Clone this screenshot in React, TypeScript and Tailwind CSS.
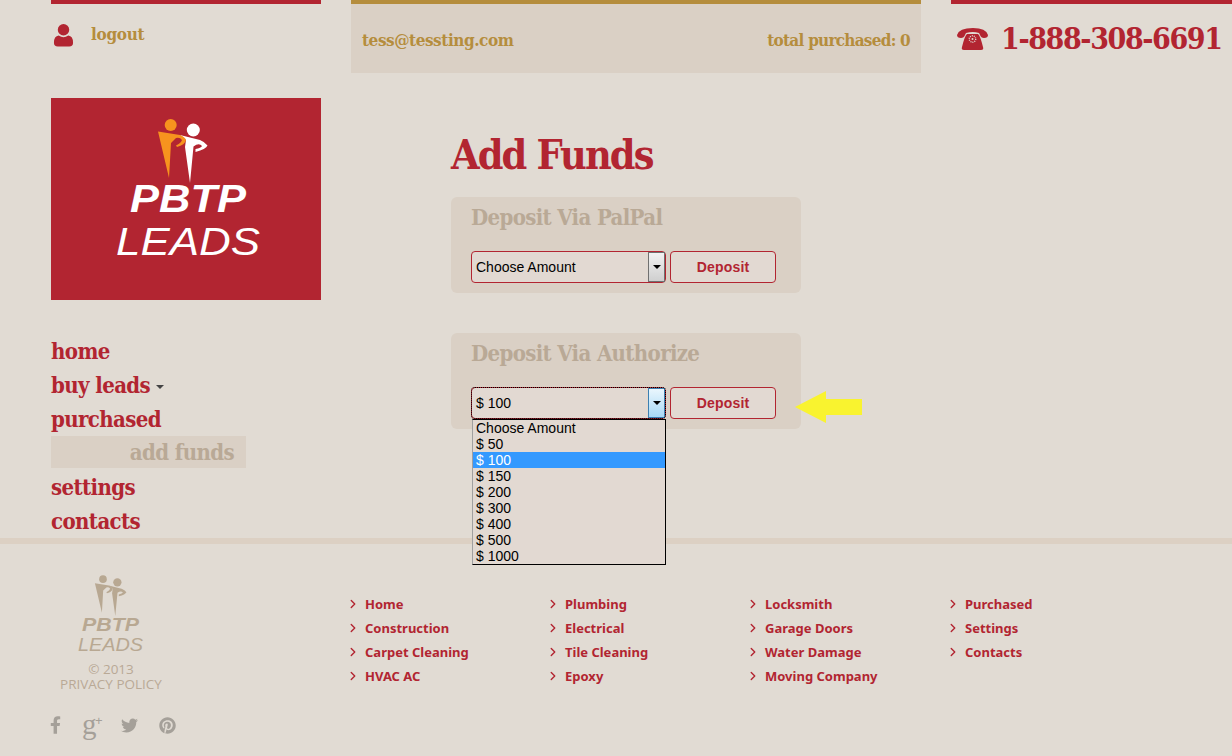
import { ChevronRight } from 'lucide-react';
import { FaFacebookF, FaPinterest, FaTwitter } from 'react-icons/fa';

const slab = "font-['DejaVu_Serif_Condensed','DejaVu_Serif',serif] font-bold";
const amounts = ['Choose Amount', '$ 50', '$ 100', '$ 150', '$ 200', '$ 300', '$ 400', '$ 500', '$ 1000'];
const footerColumns = [
  ['Home', 'Construction', 'Carpet Cleaning', 'HVAC AC'],
  ['Plumbing', 'Electrical', 'Tile Cleaning', 'Epoxy'],
  ['Locksmith', 'Garage Doors', 'Water Damage', 'Moving Company'],
  ['Purchased', 'Settings', 'Contacts'],
];

function Figures({ first, second }: { first: string; second: string }) {
  return (
    <>
      <circle cx="193.3" cy="130" r="6.5" fill={second} />
      <path d="M180 135 L192 138 L200 140 Q205 142 207.5 145.5 Q206 149 195.5 152 L195.5 149 Q201 148 202 146 Q199 142.5 193.5 146.5 L190 183 L185 147 L186 140 Z" fill={second} />
      <circle cx="170.7" cy="125" r="6" fill={first} />
      <path d="M158 131.5 L180 135 Q185 137 186 140 Q185 145 177 147 L176 145.5 Q181 143 182 140 Q180 137 176 138 L171 143 L169 178 Z" fill={first} />
    </>
  );
}

function Logo() {
  return (
    <svg viewBox="51 98 270 202" className="block h-[202px] w-[270px] bg-[#b22531]">
      <Figures first="#f7931e" second="#ffffff" />
      <text x="130" y="212" textLength="116" lengthAdjust="spacingAndGlyphs" fill="#fff" fontFamily="Liberation Sans" fontWeight="700" fontStyle="italic" fontSize="38">PBTP</text>
      <text x="116" y="255" textLength="144" lengthAdjust="spacingAndGlyphs" fill="#fff" fontFamily="Liberation Sans" fontStyle="italic" fontSize="39">LEADS</text>
    </svg>
  );
}

function FooterLogo() {
  return (
    <svg viewBox="0 0 66 80" className="block h-[80px] w-[66px]">
      <svg x="15" y="0" width="35" height="44" viewBox="155 118 55 67">
        <Figures first="#b8a892" second="#b8a892" />
      </svg>
      <text x="4" y="57" textLength="57" lengthAdjust="spacingAndGlyphs" fill="#b8a892" fontFamily="Liberation Sans" fontWeight="700" fontStyle="italic" fontSize="18">PBTP</text>
      <text x="0" y="77" textLength="65" lengthAdjust="spacingAndGlyphs" fill="#b8a892" fontFamily="Liberation Sans" fontStyle="italic" fontSize="18">LEADS</text>
    </svg>
  );
}

function SelectBox({ value, open }: { value: string; open?: boolean }) {
  return (
    <div className={`relative flex h-8 w-[195px] items-center justify-between rounded border border-[#b22531] bg-[#e2d9d2] pl-1 text-sm text-black ${open ? 'outline-1 outline-dotted outline-black -outline-offset-1' : ''}`}>
      <span>{value}</span>
      <span className={`flex h-[30px] w-[17px] items-center justify-center border ${open ? 'border-[#3c7fb1] bg-gradient-to-b from-[#eaf6fd] to-[#a7d9f5]' : 'border-[#707070] bg-gradient-to-b from-[#f2f2f2] to-[#cfcfcf]'}`}>
        <span className="h-0 w-0 border-x-[4px] border-t-[4px] border-x-transparent border-t-black" />
      </span>
    </div>
  );
}

function DepositCard({ title, value, open }: { title: string; value: string; open?: boolean }) {
  return (
    <section className="relative h-24 w-[350px] rounded-md bg-[#dad0c5] px-5 pt-2">
      <h2 className={`${slab} text-[22px] leading-6 tracking-[-0.65px] text-[#b9a996]`}>{title}</h2>
      <div className="mt-[22px] flex gap-1">
        <SelectBox value={value} open={open} />
        <button className="h-8 w-[106px] rounded border border-[#b22531] bg-[#e2d9d2] font-['Liberation_Sans',sans-serif] text-sm font-bold tracking-[0.2px] text-[#b22531]">
          Deposit
        </button>
      </div>
      {open && (
        <>
          <ul className="absolute left-[21px] top-[86px] z-10 w-[194px] border border-black border-l-[#a0a0a0] bg-[#e2d9d2] text-sm leading-4 text-black">
            {amounts.map(a => (
              <li key={a} className={a === value ? 'bg-[#3399ff] pl-[3px] text-white' : 'pl-[3px]'}>{a}</li>
            ))}
          </ul>
          <svg viewBox="0 0 68 32" className="absolute left-[344px] top-[58px] h-8 w-[68px]">
            <path d="M0 16 L31 0 V8 H67 V24 H31 V32 Z" fill="#f9f32f" />
          </svg>
        </>
      )}
    </section>
  );
}

export default function App() {
  const nav = ['home', 'buy leads', 'purchased', 'add funds', 'settings', 'contacts'];
  return (
    <div className="h-[756px] w-[1232px] overflow-hidden bg-[#e1dbd3] font-['Liberation_Sans',sans-serif]">
      {/* Top */}
      <div className="flex h-[538px] pl-[51px]">
        <aside className="w-[270px]">
          <div className="h-[98px] border-t-4 border-[#b22531]">
            <div className="flex items-center gap-[17px] pl-[2px] pt-[18px]">
              <svg viewBox="0 0 22 24" className="h-6 w-[21px]">
                <circle cx="11" cy="6.5" r="6" fill="#b22531" />
                <path d="M1 20 Q1 13 6 12.5 Q11 16 16 12.5 Q21 13 21 20 Q21 24 17 24 H5 Q1 24 1 20 Z" fill="#b22531" />
              </svg>
              <span className={`${slab} text-[17px] tracking-[-0.3px] text-[#b58d3d]`}>logout</span>
            </div>
          </div>
          <Logo />
          <nav className={`${slab} mt-[34px] text-[22px] tracking-[-0.6px] text-[#b22531]`}>
            {nav.map(item =>
              item === 'add funds' ? (
                <div key={item} className="mb-[2px] flex h-8 w-[195px] items-center justify-end bg-[#dad0c5] pr-3 text-[#b9a996]">{item}</div>
              ) : (
                <div key={item} className="flex h-[34px] items-center gap-1.5">
                  {item}
                  {item === 'buy leads' && <span className="mt-1 h-0 w-0 border-x-[4px] border-t-[4px] border-x-transparent border-t-[#444]" />}
                </div>
              ),
            )}
          </nav>
        </aside>

        <main className="ml-[30px] w-[570px]">
          <div className="flex h-[73px] items-center justify-between border-t-4 border-[#b58d3d] bg-[#dad0c5] px-[11px] pt-[5px]">
            <span className={`${slab} text-[17px] tracking-[-0.45px] text-[#b58d3d]`}>tess@tessting.com</span>
            <span className={`${slab} text-[17px] tracking-[-0.75px] text-[#b58d3d]`}>total purchased: 0</span>
          </div>
          <div className="pl-[100px]">
            <h1 className={`${slab} mt-[53px] h-[71px] text-[41px] leading-[58px] tracking-[-1.9px] text-[#b22531]`}>Add Funds</h1>
            <div className="flex flex-col gap-10">
              <DepositCard title="Deposit Via PalPal" value="Choose Amount" />
              <DepositCard title="Deposit Via Authorize" value="$ 100" open />
            </div>
          </div>
        </main>

        <div className="ml-[30px] w-[281px]">
          <div className="flex items-center gap-3 border-t-4 border-[#b22531] pl-[6px] pt-[17px]">
            <svg viewBox="0 0 32 24" className="h-6 w-8">
              <path d="M0 8 Q2 1 16 1 Q29 1 31 8 Q31 11 27 11 Q24 11 23 8 L22 6 Q16 4 9 6 L8 8 Q7 11 4 11 Q0 11 0 8 Z" fill="#b22531" />
              <path d="M10 7 H21 Q23 8 26 20 Q27 23 24 23 H7 Q4 23 5 20 Q8 8 10 7 Z" fill="#b22531" />
              <circle cx="15.5" cy="12" r="3.2" fill="none" stroke="#e1dbd3" strokeWidth="1.4" strokeDasharray="1 1" />
              <circle cx="15.5" cy="12" r="1" fill="#e1dbd3" />
            </svg>
            <span className={`${slab} whitespace-nowrap text-[30px] leading-9 tracking-[-1.4px] text-[#b22531]`}>1-888-308-6691</span>
          </div>
        </div>
      </div>

      {/* Footer */}
      <footer className="h-[218px] border-t-[6px] border-[#dcd0c3] pl-[51px] pt-[30px]">
        <div className="flex">
          <div className="w-[120px] text-center font-['Open_Sans',sans-serif] text-[13.5px] leading-[15px] text-[#b9a996]">
            <div className="flex justify-center"><FooterLogo /></div>
            <div className="mt-[8px]">© 2013</div>
            <div>PRIVACY POLICY</div>
            <div className="mt-[24px] flex h-[18px] w-[125px] items-center gap-[21px] text-[#a5a099]">
              <FaFacebookF className="-ml-px h-[18px] w-[11px]" />
              <span className="relative h-[18px] w-[18px] text-left font-['Liberation_Serif',serif] text-[29px] leading-[16px]">
                g
                <span className="absolute left-[13px] top-[-1px] font-['Liberation_Sans',sans-serif] text-[13px] leading-[11px]">+</span>
              </span>
              <FaTwitter className="h-[17px] w-[17px]" />
              <FaPinterest className="h-[17px] w-[17px]" />
            </div>
          </div>
          <div className="ml-[180px] flex pt-[18px]">
            {footerColumns.map((col, i) => (
              <ul key={i} className="w-[200px] font-['Noto_Sans',sans-serif] text-[13px] font-bold leading-6 text-[#b22531]">
                {col.map(link => (
                  <li key={link} className="-ml-[5px] flex items-center gap-[5px]">
                    <ChevronRight className="h-[14px] w-[14px]" strokeWidth={2.4} />
                    {link}
                  </li>
                ))}
              </ul>
            ))}
          </div>
        </div>
      </footer>
    </div>
  );
}
